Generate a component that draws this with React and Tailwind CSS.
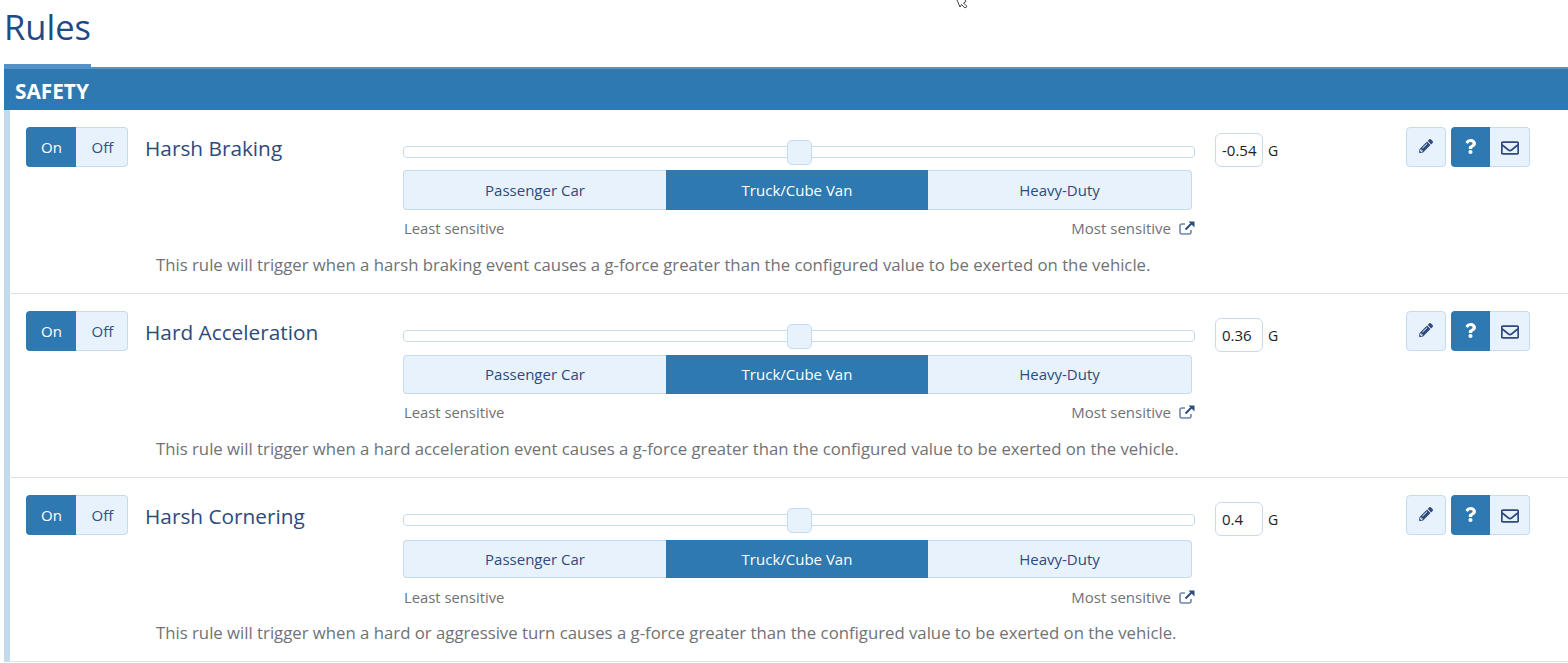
import React from "react";
import { FaPencilAlt, FaQuestion, FaRegEnvelope } from "react-icons/fa";

const rules = [
  { name: "Harsh Braking", value: "-0.54", desc: "This rule will trigger when a harsh braking event causes a g-force greater than the configured value to be exerted on the vehicle.", mt: "mt-3", h: "h-10", lab: "mt-2", inp: "mt-[6px]" },
  { name: "Hard Acceleration", value: "0.36", desc: "This rule will trigger when a hard acceleration event causes a g-force greater than the configured value to be exerted on the vehicle.", mt: "mt-[13px]", h: "h-[39px]", lab: "mt-2", inp: "mt-[7px]" },
  { name: "Harsh Cornering", value: "0.4", desc: "This rule will trigger when a hard or aggressive turn causes a g-force greater than the configured value to be exerted on the vehicle.", mt: "mt-[14px]", h: "h-[38px]", lab: "mt-[9px]", inp: "mt-[7px]" },
];

function ExternalIcon() {
  return (
    <svg className="ml-2 shrink-0" width="16" height="14" viewBox="0 0 16 14">
      <path d="M6 3H3a2 2 0 0 0-2 2v6a2 2 0 0 0 2 2h7a2 2 0 0 0 2-2V9" fill="none" stroke="#6d86ab" strokeWidth="1.6" />
      <path d="M6.5 8.5L12.5 2.5" fill="none" stroke="#2f4a7c" strokeWidth="2" />
      <path d="M9.5 0.5H15.5V6.5Z" fill="#2f4a7c" />
    </svg>
  );
}

function Rule({ r }) {
  return (
    <div className="h-[184px] border-l-[6px] border-b border-l-[#c3d9ec] border-b-[#dee2e6] pt-[17px] pl-4">
      <div className="flex items-start h-[104px]">
        <div className="flex h-10 w-[102px] text-[15px] leading-[22px] shrink-0">
          <div className="w-[50px] bg-[#2e79b2] text-white rounded-l flex items-center justify-center pl-px">On</div>
          <div className="w-[52px] bg-[#e8f2fc] text-[#34507d] border border-l-0 border-[#c5dbee] rounded-r flex items-center justify-center pl-0.5">Off</div>
        </div>
        <div className="w-[258px] ml-[17px] shrink-0 text-[#2f4a7c] text-[20.8px] leading-[42px]">{r.name}</div>
        <div className="w-[792px] shrink-0 pt-[19px]">
          <div className="relative h-3 border border-[#c5dbee] rounded bg-white">
            <div className="absolute left-[383px] -top-[7px] w-[25px] h-[25px] bg-[#e8f2fc] border border-[#c5dbee] rounded-[5px]" />
          </div>
          <div className={`flex w-[789px] text-[15px] ${r.mt} ${r.h}`}>
            <div className="w-[263px] bg-[#e8f2fc] text-[#2f4a7c] border border-r-0 border-[#c5dbee] rounded-l flex items-center justify-center">Passenger Car</div>
            <div className="w-[262px] bg-[#2e79b2] text-white flex items-center justify-center">Truck/Cube Van</div>
            <div className="w-[264px] bg-[#e8f2fc] text-[#2f4a7c] border border-l-0 border-[#c5dbee] rounded-r flex items-center justify-center">Heavy-Duty</div>
          </div>
          <div className={`flex justify-between items-center text-[14.8px] leading-[20px] text-[#6f7276] pl-px ${r.lab}`}>
            <span>Least sensitive</span>
            <span className="flex items-center text-[15px]">Most sensitive<ExternalIcon /></span>
          </div>
        </div>
        <div className={`flex items-center ml-5 shrink-0 w-[191px] ${r.inp}`}>
          <div className="w-12 h-[34px] border border-[#c5dbee] rounded-md flex items-center pl-1.5 text-[15px] text-[#222]">{r.value}</div>
          <span className="ml-[5px] text-[14px] text-[#222]">G</span>
        </div>
        <div className="w-10 h-10 bg-[#e8f2fc] border border-[#c5dbee] rounded flex items-center justify-center text-[#2f4a7c] shrink-0 pb-0.5">
          <FaPencilAlt size={14} />
        </div>
        <div className="flex ml-[5px] shrink-0 h-10">
          <div className="w-[39px] bg-[#2e79b2] rounded-l flex items-center justify-center text-white pb-0.5"><FaQuestion size={15} /></div>
          <div className="w-10 bg-[#e8f2fc] border border-l-0 border-[#c5dbee] rounded-r flex items-center justify-center text-[#2f4a7c] pt-0.5"><FaRegEnvelope size={18} /></div>
        </div>
      </div>
      <p className="ml-[130px] mt-[22px] text-[16.74px] leading-[24px] text-[#6f7276] whitespace-nowrap">{r.desc}</p>
    </div>
  );
}

export default function App() {
  return (
    <div className="relative w-[1568px] h-[663px] overflow-hidden bg-white pl-1 font-['Open_Sans','Noto_Sans',sans-serif]">
      <svg className="absolute left-[956px] top-0" width="14" height="9" viewBox="0 0 14 9" fill="white" stroke="#444" strokeWidth="1"><path d="M1 0 L4 7 L5.5 4.5 L9 8 L11 6.5 L7.5 3 L10 1.5 L9 0" /></svg>
      <h1 className="h-16 text-[34.5px] leading-[54px] text-[#234a85]">Rules</h1>
      <div className="w-[87px] h-[3px] bg-[#5593c6]" />
      <div className="h-[2px] bg-[#5593c6]" />
      <div className="h-[41px] bg-[#2e79b2] pl-[11px] text-white font-bold text-[20.8px] leading-[44px]">SAFETY</div>
      {rules.map((r) => <Rule key={r.name} r={r} />)}
    </div>
  );
}
